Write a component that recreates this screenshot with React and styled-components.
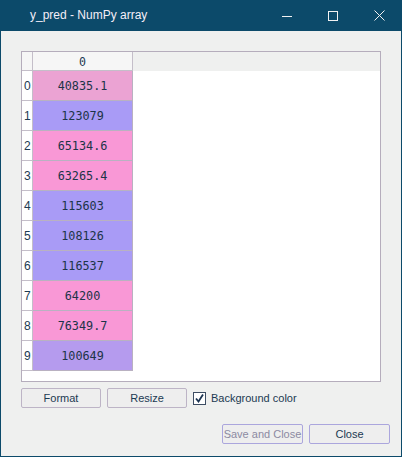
import React from "react";
import styled, { createGlobalStyle } from "styled-components";

const GlobalStyle = createGlobalStyle`
  html, body {
    margin: 0;
    padding: 0;
    background: #ffffff;
  }
  * {
    box-sizing: border-box;
  }
`;

const UI_FONT = `"Liberation Sans", "Noto Sans", sans-serif`;
const MONO_FONT = `"DejaVu Sans Mono", "Liberation Mono", monospace`;

const Window = styled.div`
  width: 402px;
  height: 457px;
  display: flex;
  flex-direction: column;
  border: 1px solid #0c4a6a;
  border-top: none;
  background: #eff0ef;
  font-family: ${UI_FONT};
  color: #1c3a52;
`;

const TitleBar = styled.div`
  height: 31px;
  margin: 0 -1px;
  background: #0c4a6a;
  display: flex;
  align-items: center;
  flex-shrink: 0;
`;

const TitleText = styled.div`
  margin-left: 30px;
  font-size: 12px;
  color: #f4eef8;
  flex: 1;
  padding-bottom: 1px;
`;

const TitleButton = styled.div`
  width: 46px;
  height: 31px;
  display: flex;
  align-items: center;
  justify-content: center;
`;

const Body = styled.div`
  flex: 1;
  display: flex;
  flex-direction: column;
  padding: 20px 20px 0 20px;
`;

const TableFrame = styled.div`
  height: 331px;
  border: 1px solid #b5adbc;
  background: #ffffff;
  display: flex;
  flex-direction: column;
`;

const HeaderRow = styled.div`
  display: flex;
  height: 19px;
  background: #eff0ef;
`;

const Corner = styled.div`
  width: 11px;
  border-right: 1px solid #c4bec9;
  border-bottom: 1px solid #c4bec9;
  background: #f6f6f6;
`;

const ColHeader = styled.div`
  width: 100px;
  border-right: 1px solid #c4bec9;
  border-bottom: 1px solid #c4bec9;
  background: #f6f6f6;
  font-family: ${MONO_FONT};
  font-size: 11.6px;
  display: flex;
  align-items: center;
  justify-content: center;
  padding-top: 1px;
`;

const Row = styled.div`
  display: flex;
  height: 30px;
`;

const RowHeader = styled.div`
  width: 11px;
  border-right: 1px solid #c4bec9;
  border-bottom: 1px solid #c4bec9;
  background: #ffffff;
  font-size: 12px;
  display: flex;
  align-items: center;
  padding-left: 2px;
  padding-top: 1px;
`;

const Cell = styled.div`
  width: 100px;
  border-right: 1px solid #b9b1c1;
  border-bottom: 1px solid #b9b1c1;
  background: ${(p) => p.$bg};
  font-family: ${MONO_FONT};
  font-size: 11.8px;
  color: #1c3448;
  display: flex;
  align-items: center;
  justify-content: center;
  padding-top: 1px;
`;

const Filler = styled.div`
  flex: 1;
`;

const ButtonRow = styled.div`
  display: flex;
  align-items: center;
  margin-top: 6px;
  height: 20px;
`;

const Button = styled.button`
  width: ${(p) => p.$w || 80}px;
  height: 20px;
  margin-right: ${(p) => p.$gap || 0}px;
  border: 1px solid ${(p) => (p.$accent ? "#aba6dd" : "#bdb4c6")};
  border-radius: 2px;
  background: #eeeeee;
  font-family: ${UI_FONT};
  font-size: 11px;
  white-space: nowrap;
  color: ${(p) => (p.disabled ? "#8c8aa2" : "#1c3a52")};
  padding: 0 0 1px 0;
  display: flex;
  align-items: center;
  justify-content: center;
`;

const CheckLabel = styled.label`
  display: flex;
  align-items: center;
  margin-left: 6px;
  font-size: 11px;
  white-space: nowrap;
  color: #1c3a52;
`;

const CheckBox = styled.span`
  width: 13px;
  height: 13px;
  border: 1px solid #3d4d63;
  background: #ffffff;
  display: flex;
  align-items: center;
  justify-content: center;
  margin-right: 5px;
`;

const Footer = styled.div`
  display: flex;
  justify-content: flex-end;
  margin-top: 16px;
  margin-right: -9px;
`;

const rows = [
  { v: "40835.1", bg: "#eba3d3" },
  { v: "123079", bg: "#a99bf6" },
  { v: "65134.6", bg: "#f998d6" },
  { v: "63265.4", bg: "#f998d6" },
  { v: "115603", bg: "#a99bf6" },
  { v: "108126", bg: "#a99bf6" },
  { v: "116537", bg: "#a99bf6" },
  { v: "64200", bg: "#f998d6" },
  { v: "76349.7", bg: "#f998d6" },
  { v: "100649", bg: "#b59bee" },
];

const App = () => {
  return (
    <>
      <GlobalStyle />
      <Window>
        <TitleBar>
          <TitleText>y_pred - NumPy array</TitleText>
          <TitleButton>
            <svg width="10" height="10" viewBox="0 0 10 10">
              <line x1="0" y1="5.5" x2="10" y2="5.5" stroke="#f2f2f2" strokeWidth="1" />
            </svg>
          </TitleButton>
          <TitleButton>
            <svg width="10" height="10" viewBox="0 0 10 10">
              <rect x="0.5" y="0.5" width="9" height="9" fill="none" stroke="#f2f2f2" strokeWidth="1" />
            </svg>
          </TitleButton>
          <TitleButton>
            <svg width="11" height="11" viewBox="0 0 11 11">
              <path d="M0.5 0.5 L10.5 10.5 M10.5 0.5 L0.5 10.5" stroke="#f2f2f2" strokeWidth="1" />
            </svg>
          </TitleButton>
        </TitleBar>
        <Body>
          <TableFrame>
            <HeaderRow>
              <Corner />
              <ColHeader>0</ColHeader>
            </HeaderRow>
            {rows.map((r, i) => (
              <Row key={i}>
                <RowHeader>{i}</RowHeader>
                <Cell $bg={r.bg}>{r.v}</Cell>
              </Row>
            ))}
            <Filler />
          </TableFrame>
          <ButtonRow>
            <Button $gap={6}>Format</Button>
            <Button>Resize</Button>
            <CheckLabel>
              <CheckBox>
                <svg width="9" height="9" viewBox="0 0 9 9">
                  <path d="M1 4.5 L3.5 7.5 L8 0.5" fill="none" stroke="#1c3452" strokeWidth="1.8" />
                </svg>
              </CheckBox>
              Background color
            </CheckLabel>
          </ButtonRow>
          <Footer>
            <Button disabled $accent $w={81} $gap={6}>Save and Close</Button>
            <Button $accent $w={81}>Close</Button>
          </Footer>
        </Body>
      </Window>
    </>
  );
};

export default App;
